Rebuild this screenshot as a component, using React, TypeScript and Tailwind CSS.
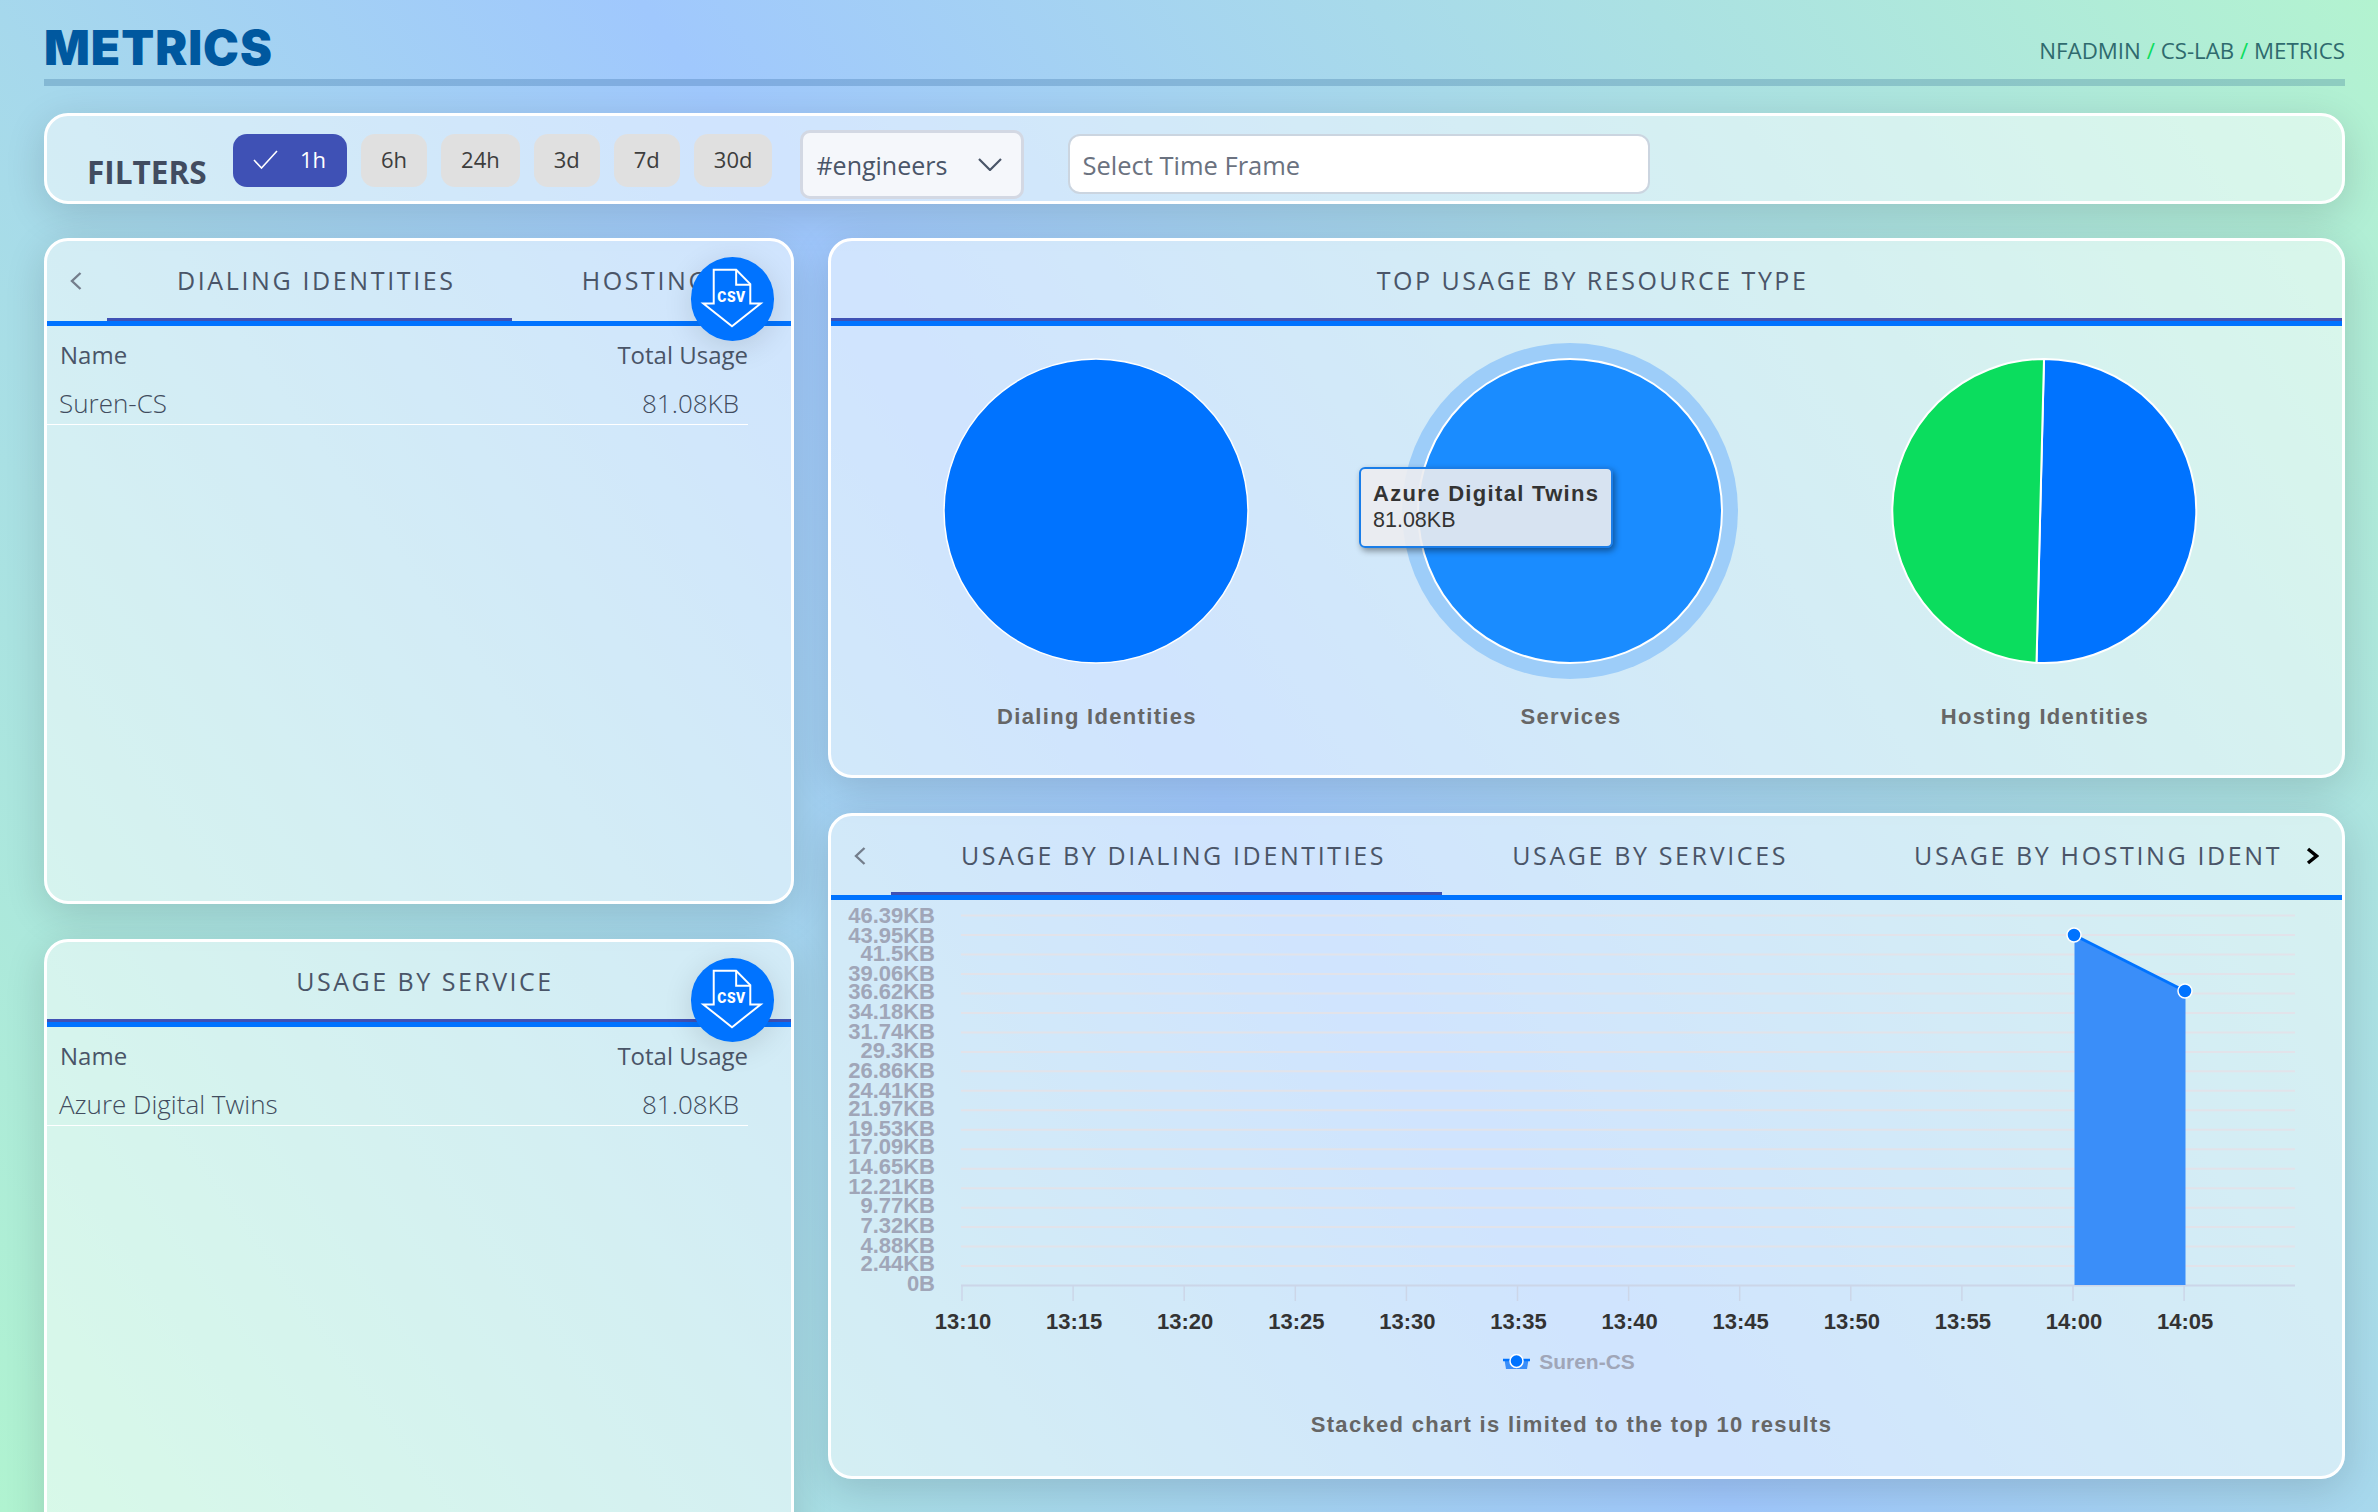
const ranges = ['6h', '24h', '3d', '7d', '30d'];

const yLabels = [
  ['46.39KB', 915], ['43.95KB', 935], ['41.5KB', 953], ['39.06KB', 973], ['36.62KB', 991],
  ['34.18KB', 1011], ['31.74KB', 1031], ['29.3KB', 1050], ['26.86KB', 1070], ['24.41KB', 1090],
  ['21.97KB', 1108], ['19.53KB', 1128], ['17.09KB', 1146], ['14.65KB', 1166], ['12.21KB', 1186],
  ['9.77KB', 1205], ['7.32KB', 1225], ['4.88KB', 1245], ['2.44KB', 1263], ['0B', 1283],
] as const;

const xLabels = ['13:10', '13:15', '13:20', '13:25', '13:30', '13:35', '13:40', '13:45', '13:50', '13:55', '14:00', '14:05'];

function CsvBadge() {
  return (
    <button className="absolute right-[17px] top-[16px] z-10 h-[84px] w-[83px] rounded-full bg-[#0073ff] shadow-[0_6px_30px_rgba(0,0,0,0.12)]">
      <svg viewBox="0 0 84 84" className="h-full w-full">
        <path
          d="M23 12.5H45.7L60 27V46.5H70.5L41.5 69.5L12.5 46.5H23Z"
          fill="none"
          stroke="white"
          strokeWidth="2"
        />
        <path d="M45.7 12.5V27.5H60" fill="none" stroke="white" strokeWidth="2" />
        <text x="41" y="45" textAnchor="middle" fill="white" fontSize="14" fontWeight="900" fontFamily="Roboto, sans-serif" letterSpacing="0.5">
          CSV
        </text>
      </svg>
    </button>
  );
}

function PrevArrow() {
  return (
    <div className="flex w-[60px] shrink-0 items-center justify-center pr-[2px]">
      <svg viewBox="0 0 12 18" className="h-[18px] w-[12px]">
        <path d="M10.5 1L2 9L10.5 17" fill="none" stroke="#747e8c" strokeWidth="2.4" />
      </svg>
    </div>
  );
}

function UsageTable({ name }: { name: string }) {
  return (
    <div className="w-[701px] text-[#4a5568]">
      <div className="flex h-[58px] items-center justify-between pl-[13px] text-[24px] font-medium">
        <span>Name</span>
        <span>Total Usage</span>
      </div>
      <div className="flex h-[41px] items-center justify-between border-b border-white pb-[2px] pl-[12px] pr-[9px] text-[26px] font-light text-[#414c5e]">
        <span>{name}</span>
        <span>81.08KB</span>
      </div>
    </div>
  );
}

function Card({ className, children }: { className: string; children: React.ReactNode }) {
  return (
    <div className={`relative overflow-hidden rounded-[24px] border-[3px] border-white bg-white/50 shadow-[0_10px_40px_rgba(0,0,0,0.14)] ${className}`}>
      {children}
    </div>
  );
}

function Tab({ label, active }: { label: string; active?: boolean }) {
  return (
    <div className={`flex h-full shrink-0 items-center whitespace-nowrap pl-[70px] pr-[56px] ${active ? 'relative' : ''}`}>
      {label}
      {active && <span className="absolute bottom-0 left-0 right-0 h-[3px] bg-[#3f51b5]" />}
    </div>
  );
}

function TitleBar({ label }: { label: string }) {
  return (
    <div className="relative flex h-[85px] items-center justify-center border-b-[5px] border-[#0073ff] pl-[12px] text-[25px] tracking-[0.1em] text-[#4a5568]">
      {label}
      <span className="absolute bottom-0 left-0 right-0 h-[3px] bg-[#3f51b5]" />
    </div>
  );
}

function Pie({ label, children }: { label: string; children: React.ReactNode }) {
  return (
    <div className="flex w-[474px] flex-col items-center">
      <svg viewBox="-170 -170 340 340" className="h-[340px] w-[340px]">
        {children}
      </svg>
      <div className="mt-[19px] pl-[2px] font-['Liberation_Sans'] text-[22px] font-bold tracking-[0.06em] text-[#666666]">{label}</div>
    </div>
  );
}

function UsageChart() {
  const ticks = xLabels.map((_, i) => 961 + i * 111.1);
  return (
    <svg viewBox="830 900 1512 440" className="h-[440px] w-[1512px]" fontFamily="'Liberation Sans', sans-serif" fontWeight="700" fontSize="22">
      {yLabels.slice(0, 19).map((_, i) => (
        <line key={i} x1="960" x2="2294" y1={915.6 + i * 19.47} y2={915.6 + i * 19.47} stroke="#e2e3ea" strokeWidth="2" />
      ))}
      <line x1="960" x2="2294" y1="1285.5" y2="1285.5" stroke="#ccd6e8" strokeWidth="2" />
      {ticks.map((x) => (
        <line key={x} x1={x} x2={x} y1="1285" y2="1301" stroke="#ccd6e8" strokeWidth="1.5" />
      ))}
      {yLabels.map(([t, y]) => (
        <text key={t} x="934" y={y + 7.5} textAnchor="end" fill="#a0a6b8">
          {t}
        </text>
      ))}
      {xLabels.map((t, i) => (
        <text key={t} x={ticks[i] + 1} y="1329" textAnchor="middle" fill="#333333">
          {t}
        </text>
      ))}
      <path d="M2073.5 935L2184.5 991V1285H2073.5Z" fill="#3a8ef9" />
      <path d="M2073 935L2184 991" stroke="#0073ff" strokeWidth="3" />
      <circle cx="2073" cy="935" r="7" fill="#0073ff" stroke="white" strokeWidth="1.5" />
      <circle cx="2184" cy="991" r="7" fill="#0073ff" stroke="white" strokeWidth="1.5" />
    </svg>
  );
}

export default function App() {
  return (
    <div className="h-[1512px] w-[2378px] overflow-hidden bg-[linear-gradient(54deg,#b0f3d0_0%,#a0c8fd_50%,#b3f3d0_100%)] pl-[44px] pr-[33px] pt-[23px] font-['Open_Sans','Noto_Sans',sans-serif]">
      {/* page header */}
      <header className="flex h-[56px] items-center justify-between">
        <h1 className="pb-[7px] font-['Inter'] text-[48px] font-black leading-none tracking-[0.02em] text-[#00589f]">METRICS</h1>
        <div className="text-[22.3px] text-[#2f6a6e]">
          NFADMIN <span className="text-[#0bdd5e]">/</span> CS-LAB <span className="text-[#0bdd5e]">/</span> METRICS
        </div>
      </header>
      <div className="h-[7px] bg-[#003c78]/20" />

      {/* filters */}
      <div className="relative mt-[27px] flex h-[91px] items-start overflow-hidden rounded-[24px] border-[3px] border-white bg-white/50 pl-[40px] shadow-[0_10px_40px_rgba(0,0,0,0.14)]">
        <div className="mt-[36px] w-[146px] text-[31.5px] font-bold leading-[40px] text-[#414c60]">FILTERS</div>
        <div className="mt-[18px] flex h-[53px] gap-[14px] text-[22px]">
          <div className="flex w-[114px] items-center rounded-[14px] bg-[#3f51b5] pb-[2px] pl-[20px] text-white">
            <svg viewBox="0 0 25 19" className="h-[19px] w-[25px]">
              <path d="M1 10L8.5 18L24 1" fill="none" stroke="white" strokeWidth="1.6" />
            </svg>
            <span className="ml-[22px]">1h</span>
          </div>
          {ranges.map((r) => (
            <div key={r} className="flex items-center justify-center rounded-[14px] bg-[#e0e0e0] px-[20px] pb-[2px] text-[#3d3d3d]">
              {r}
            </div>
          ))}
        </div>
        <div className="ml-[28px] mt-[14px] flex h-[69px] w-[224px] items-center justify-between rounded-[10px] border-[3px] border-[#d3d8e3] bg-[#f5f7fb] pl-[13px] pr-[7px] text-[25px] text-[#4a5568]">
          <span className="pt-[2px]">#engineers</span>
          <svg viewBox="0 0 24 13" className="h-[13px] w-[24px] mr-[12px]">
            <path d="M1 1L12 12L23 1" fill="none" stroke="#4a5568" strokeWidth="2.2" />
          </svg>
        </div>
        <div className="ml-[44px] mt-[18px] flex h-[60px] w-[582px] items-center rounded-[12px] border-[2px] border-[#cbd5e0] bg-white pl-[12px] pt-[2px] text-[25.5px] text-[#6b7280]">
          Select Time Frame
        </div>
      </div>

      <div className="mt-[34px] flex items-start gap-[34px]">
        {/* left column */}
        <div className="flex w-[750px] shrink-0 flex-col gap-[35px]">
          <Card className="h-[666px]">
            <div className="flex h-[85px] items-stretch border-b-[5px] border-[#0073ff] text-[25px] tracking-[0.105em] text-[#4a5568]">
              <PrevArrow />
              <div className="flex min-w-0 flex-1 overflow-hidden">
                <Tab label="DIALING IDENTITIES" active />
                <Tab label="HOSTING IDENTITIES" />
              </div>
              <div className="w-[60px] shrink-0" />
            </div>
            <UsageTable name="Suren-CS" />
            <CsvBadge />
          </Card>
          <Card className="h-[666px]">
            <TitleBar label="USAGE BY SERVICE" />
            <UsageTable name="Azure Digital Twins" />
            <CsvBadge />
          </Card>
        </div>

        {/* right column */}
        <div className="flex w-[1517px] shrink-0 flex-col gap-[35px]">
          <Card className="h-[540px]">
            <TitleBar label="TOP USAGE BY RESOURCE TYPE" />
            <div className="mt-[15px] flex pl-[28px]">
              <Pie label="Dialing Identities">
                <circle r="152" fill="#0073ff" stroke="white" strokeWidth="1.5" />
              </Pie>
              <Pie label="Services">
                <circle r="168" fill="#9dcdf9" />
                <circle r="152" fill="#1a8cff" stroke="white" strokeWidth="2" />
              </Pie>
              <Pie label="Hosting Identities">
                <path d="M0 -152A152 152 0 1 1 -7.5 151.8L0 -152Z" fill="#0073ff" stroke="white" strokeWidth="2" />
                <path d="M0 -152A152 152 0 0 0 -7.5 151.8L0 -152Z" fill="#0bdd5e" stroke="white" strokeWidth="2" />
              </Pie>
            </div>
            {/* hover tooltip */}
            <div className="absolute left-[528px] top-[226px] h-[81px] w-[254px] rounded-[6px] border-[2px] border-[#1a7de8] bg-[#ececf0]/90 pl-[12px] pt-[12px] font-['Liberation_Sans'] text-[22px] leading-[26px] text-[#333333] shadow-[2px_3px_6px_rgba(0,0,0,0.4)]">
              <div className="font-bold tracking-[0.06em]">Azure Digital Twins</div>
              <div className="text-[21.5px]">81.08KB</div>
            </div>
          </Card>

          <Card className="h-[666px]">
            <div className="flex h-[84px] items-stretch border-b-[5px] border-[#0073ff] text-[25px] tracking-[0.105em] text-[#4a5568]">
              <PrevArrow />
              <div className="flex min-w-0 flex-1 overflow-hidden">
                <Tab label="USAGE BY DIALING IDENTITIES" active />
                <Tab label="USAGE BY SERVICES" />
                <Tab label="USAGE BY HOSTING IDENTITIES" />
              </div>
              <div className="flex w-[60px] shrink-0 items-center justify-center">
                <svg viewBox="0 0 13 18" className="h-[18px] w-[13px]">
                  <path d="M2 2L10.5 9L2 16" fill="none" stroke="black" strokeWidth="3.4" />
                </svg>
              </div>
            </div>
            <UsageChart />
            <div className="mt-[10px] flex items-center justify-center gap-[9px] pr-[35px] font-['Liberation_Sans'] text-[21px] font-bold leading-[24px] text-[#a0a6b8]">
              <svg viewBox="0 0 27 16" className="h-[16px] w-[27px]">
                <path d="M1.5 6H25.5L24 15H3Z" fill="#3a8ef9" />
                <path d="M0 6H27" stroke="#0073ff" strokeWidth="2.5" />
                <circle cx="13.5" cy="7" r="6.5" fill="#0073ff" stroke="white" strokeWidth="1.5" />
              </svg>
              <span>Suren-CS</span>
            </div>
            <div className="mt-[34px] pr-[30px] text-center font-['Liberation_Sans'] text-[22px] font-bold tracking-[0.06em] text-[#666666]">
              Stacked chart is limited to the top 10 results
            </div>
          </Card>
        </div>
      </div>
    </div>
  );
}
